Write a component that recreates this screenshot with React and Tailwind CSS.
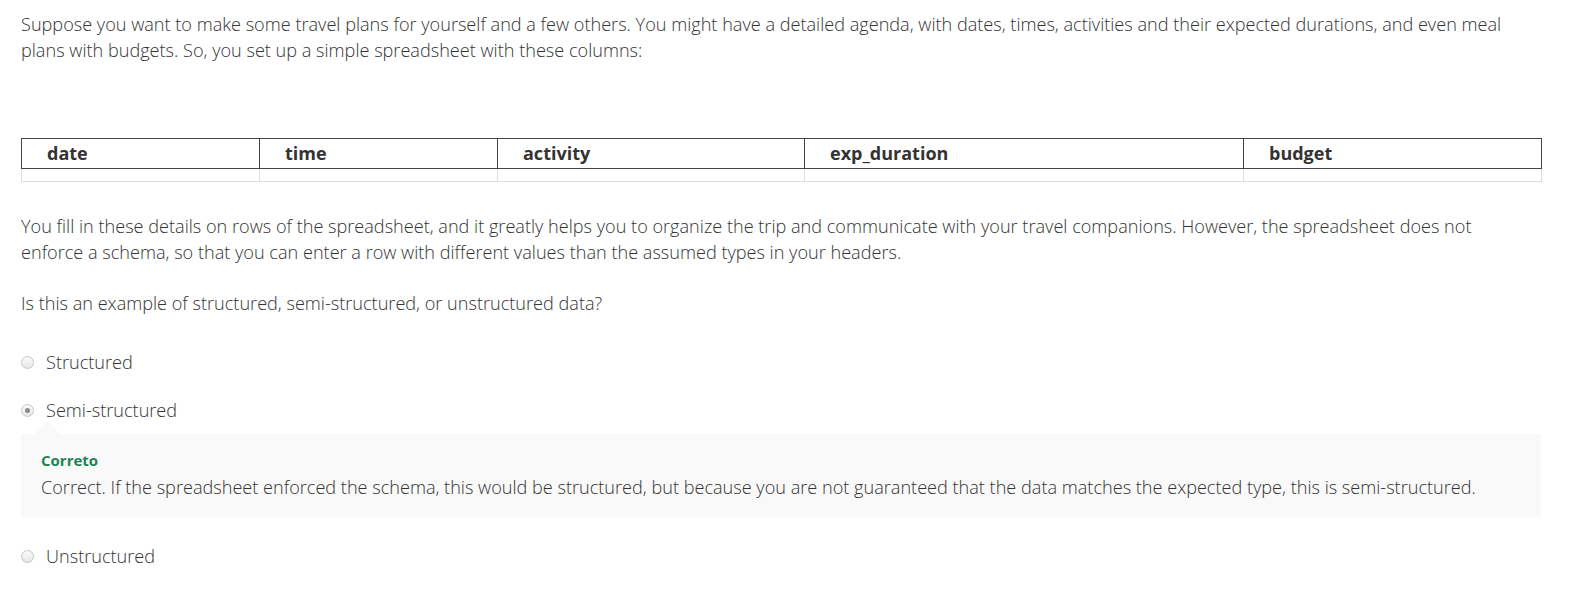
import React from "react";

function Radio({ checked }) {
  return (
    <span className="flex h-[13px] w-[13px] shrink-0 items-center justify-center rounded-full border border-[#c8c8c8] bg-gradient-to-b from-[#fbfbfb] to-[#e6e6e6]">
      {checked && <span className="h-[5px] w-[5px] rounded-full bg-[#8a8a8a]" />}
    </span>
  );
}

function Option({ label, checked }) {
  return (
    <div className="flex items-center gap-[12px] h-[26px]">
      <Radio checked={checked} />
      <span>{label}</span>
    </div>
  );
}

export default function App() {
  const cols = [
    { name: "date", w: 238 },
    { name: "time", w: 238 },
    { name: "activity", w: 307 },
    { name: "exp_duration", w: 439 },
    { name: "budget", w: 298 },
  ];
  return (
    <div className="bg-white pl-[21px] pr-[37px] pt-[11px] pb-[30px] text-[18.13px] font-light leading-[26px] text-[#333] [font-family:'Open_Sans',sans-serif]">
      <p className="pr-[2px]">
        Suppose you want to make some travel plans for yourself and a few others. You might have a detailed agenda, with dates, times, activities and their expected durations, and even meal plans with budgets. So, you set up a simple spreadsheet with these columns:
      </p>
      <table className="mt-[75px] w-[1520px] table-fixed border-collapse text-[18px]">
        <colgroup>
          {cols.map((c) => (
            <col key={c.name} style={{ width: c.w }} />
          ))}
        </colgroup>
        <thead>
          <tr>
            {cols.map((c) => (
              <th
                key={c.name}
                className="border border-[#444] px-[25px] py-[3px] text-left font-bold leading-[23px] text-[#333]"
              >
                {c.name}
              </th>
            ))}
          </tr>
        </thead>
        <tbody>
          <tr>
            {cols.map((c) => (
              <td key={c.name} className="h-[13px] border border-t-0 border-[#dedede] p-0" />
            ))}
          </tr>
        </tbody>
      </table>
      <p className="mt-[31px] pr-[12px]">
        You fill in these details on rows of the spreadsheet, and it greatly helps you to organize the trip and communicate with your travel companions. However, the spreadsheet does not enforce a schema, so that you can enter a row with different values than the assumed types in your headers.
      </p>
      <p className="mt-[25px]">Is this an example of structured, semi-structured, or unstructured data?</p>
      <div className="mt-[33px]">
        <Option label="Structured" />
      </div>
      <div className="mt-[22px]">
        <Option label="Semi-structured" checked />
      </div>
      <div className="relative mt-[11px] w-[1520px] bg-[#f9f9f9] px-[20px] pt-[15px] pb-[17px]">
        <span className="absolute left-[13px] top-[-13px] h-0 w-0 border-x-[13px] border-b-[13px] border-x-transparent border-b-[#f9f9f9]" />
        <div className="text-[15px] font-bold leading-[22px] text-[#1f8354]">Correto</div>
        <div className="mt-[3px]">
          Correct. If the spreadsheet enforced the schema, this would be structured, but because you are not guaranteed that the data matches the expected type, this is semi-structured.
        </div>
      </div>
      <div className="mt-[26px]">
        <Option label="Unstructured" />
      </div>
    </div>
  );
}
